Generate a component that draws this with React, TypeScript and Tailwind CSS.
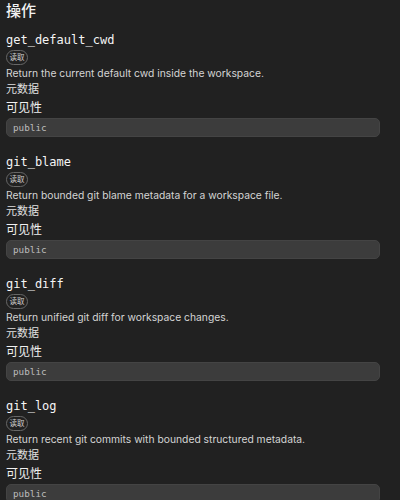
import React from "react";

const ops = [
  { name: "get_default_cwd", desc: "Return the current default cwd inside the workspace." },
  { name: "git_blame", desc: "Return bounded git blame metadata for a workspace file." },
  { name: "git_diff", desc: "Return unified git diff for workspace changes." },
  { name: "git_log", desc: "Return recent git commits with bounded structured metadata." },
];

export default function App() {
  return (
    <div className="w-[400px] h-[500px] overflow-hidden bg-[#212121] px-[6px] text-white font-['Inter','Noto_Sans_CJK_SC',sans-serif]">
      <div className="pt-[1px] text-[15px] leading-[20px] font-medium text-[#f2f2f2]">操作</div>
      <div className="mt-[11px] flex flex-col gap-[17px]">
        {ops.map((op) => (
          <div key={op.name} className="flex flex-col items-start">
            <div className="font-['DejaVu_Sans_Mono',monospace] text-[12px] leading-[16px] text-[#f5f5f5]">
              {op.name}
            </div>
            <div className="mt-[2px] h-[15px] w-[22px] rounded-full border border-[#676767] flex items-center justify-center text-[7.5px] leading-none text-[#cfcfcf]">
              读取
            </div>
            <div className="mt-[1px] text-[10.3px] leading-[14px] text-[#d4d4d4]">{op.desc}</div>
            <div className="mt-[2px] text-[11px] leading-[14px] text-[#e0e0e0]">元数据</div>
            <div className="mt-[4px] text-[12px] leading-[15px] font-normal text-[#f0f0f0]">可见性</div>
            <div className="mt-[3px] h-[19px] w-[374px] rounded-[5px] bg-[#3c3c3c] border border-[#444444] flex items-center px-[6px] font-['DejaVu_Sans_Mono',monospace] text-[9.3px] text-[#bdbdbd]">
              public
            </div>
          </div>
        ))}
      </div>
    </div>
  );
}
